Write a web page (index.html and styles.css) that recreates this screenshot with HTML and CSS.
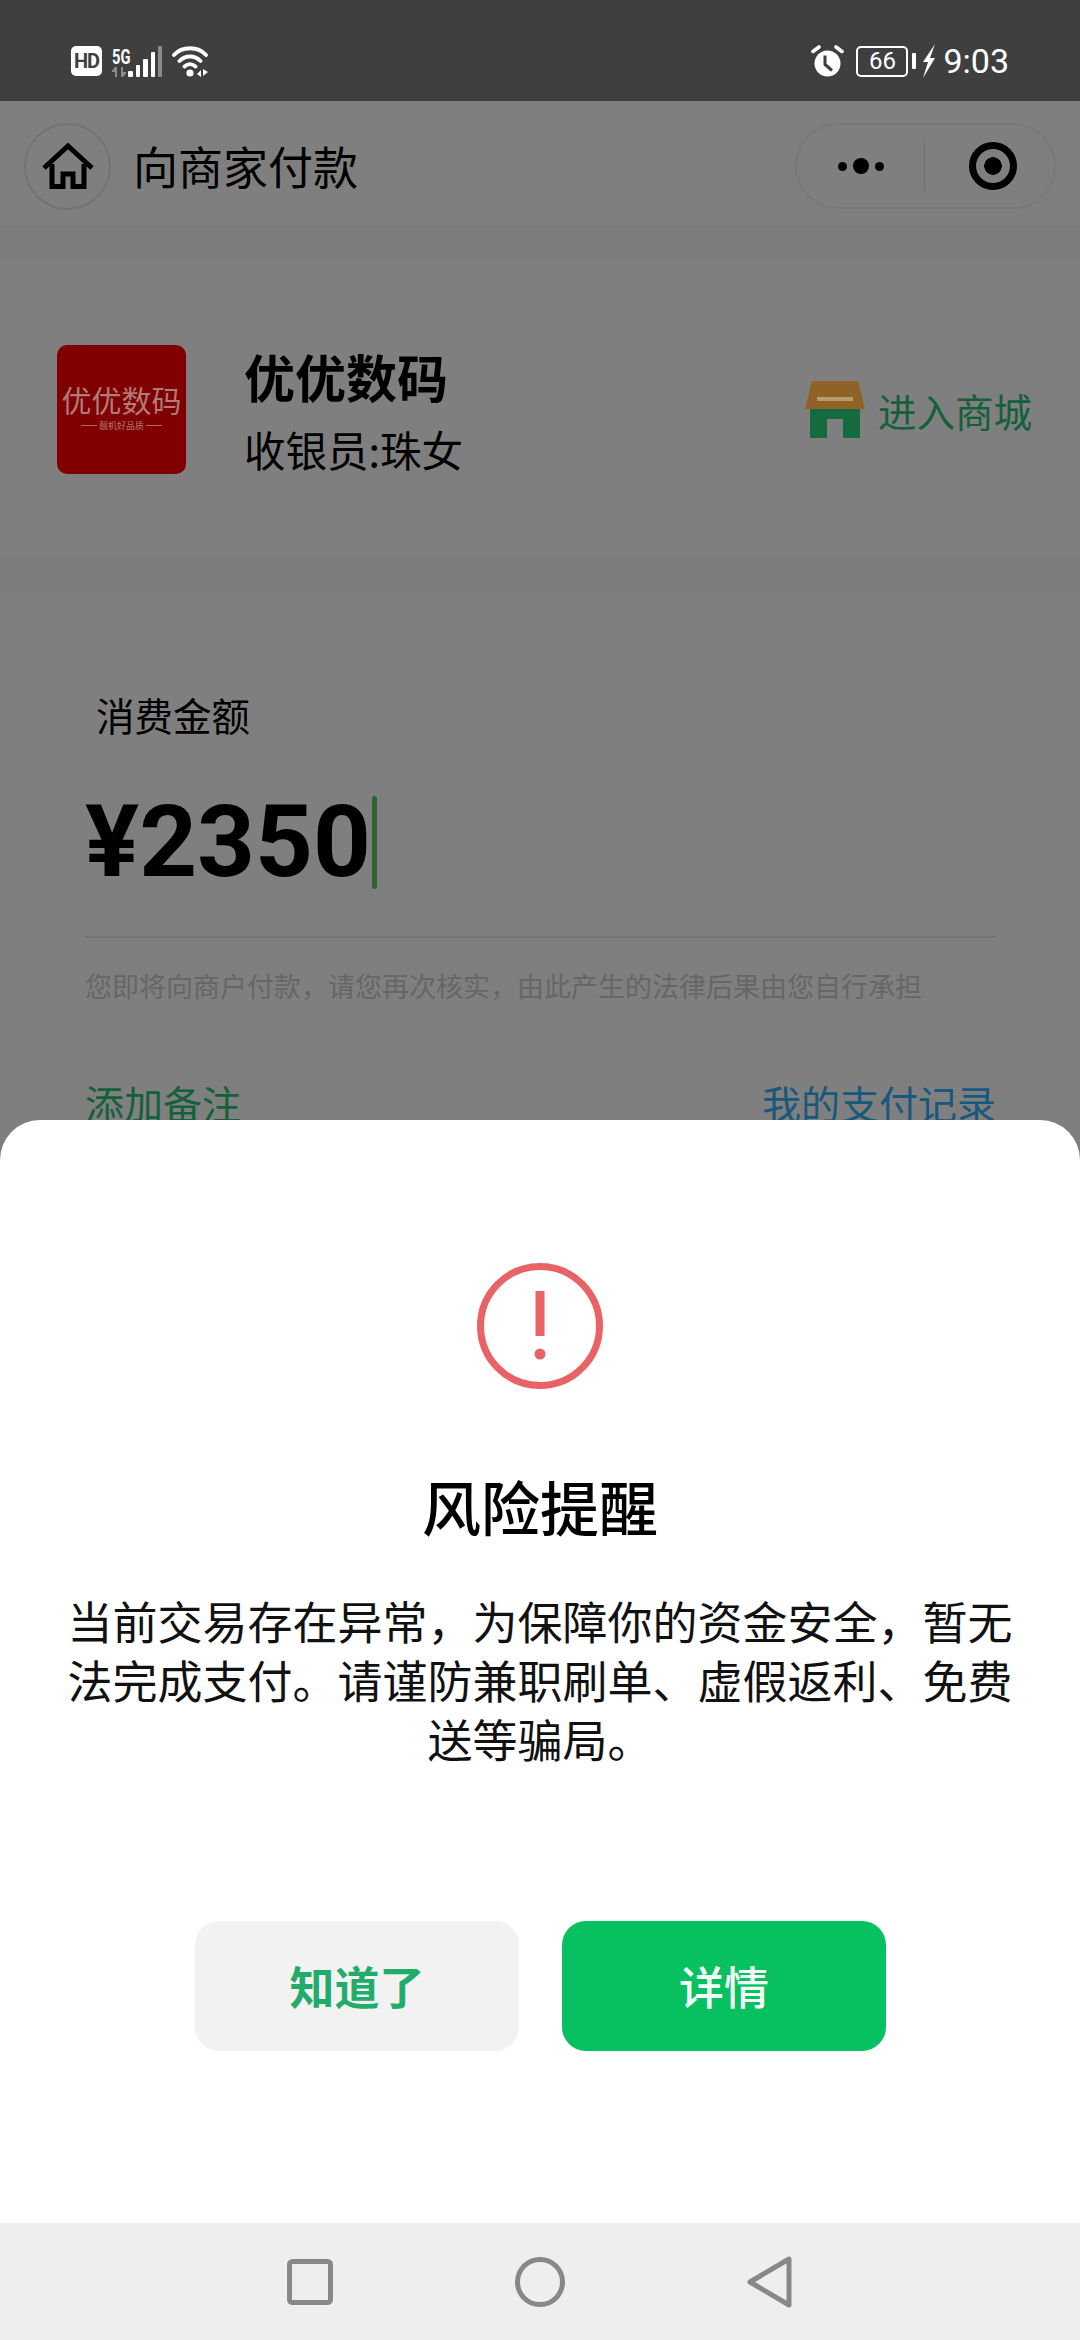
FILE: index.html
```html
<!DOCTYPE html>
<html>
	<head>
		<meta charset="utf-8">
		<title>向商家付款</title>
		<link rel="stylesheet" href="styles.css">
	</head>
	<body>
		<div class="screen">
			<div class="status_bar">
				<div class="status_left">
					<span class="hd_badge">HD</span>
					<div class="signal">
						<div class="signal_labels">
							<span class="signal_5g">5G</span>
							<svg width="14" height="10" viewBox="0 0 14 10">
								<path d="M4 0v10M4 0L1 4h3M10 10V0M10 10l3-4h-3" fill="none" stroke="#8a8a8a" stroke-width="2"/>
							</svg>
						</div>
						<svg width="34" height="31" viewBox="0 0 34 31">
							<rect x="0" y="25" width="5" height="6" rx="1" fill="#fff"/>
							<rect x="8" y="19" width="4" height="12" rx="1" fill="#fff"/>
							<rect x="15" y="13" width="5" height="18" rx="1" fill="#fff"/>
							<rect x="23" y="6" width="4" height="25" rx="1" fill="#fff"/>
							<rect x="30" y="0" width="4" height="31" rx="1" fill="#8a8a8a"/>
						</svg>
					</div>
					<svg class="wifi" width="38" height="31" viewBox="0 0 38 31">
						<path d="M2 9C10 0 26 0 34 9M7.5 15c6-6 15-6 21 0M12.5 20.5c3.500-3 7.500-3 11 0" fill="none" stroke="#fff" stroke-width="3.800" stroke-linecap="round"/>
						<circle cx="18" cy="27" r="3.600" fill="#fff"/>
						<path d="M25 28l4-4v7zM31 23v7l5-4z" fill="#fff"/>
					</svg>
				</div>
				<div class="status_right">
					<svg width="33" height="32" viewBox="0 0 33 32">
						<circle cx="16.500" cy="18.500" r="13" fill="#fff"/>
						<path d="M14 10.500v9l7 6" fill="none" stroke="#3f3f3f" stroke-width="3"/>
						<path d="M2 6.500l6-4.500M31 6.500l-6-4.500" stroke="#fff" stroke-width="3.600" stroke-linecap="round"/>
					</svg>
					<div class="battery">
						<span class="battery_body">66</span>
						<span class="battery_cap"></span>
					</div>
					<svg class="bolt" width="14" height="34" viewBox="0 0 14 34">
						<path d="M13 0L1 18h5L1 34 13 14H8z" fill="#fff"/>
					</svg>
					<span class="status_time">9:03</span>
				</div>
			</div>
			<div class="stage">
				<div class="title_bar">
					<div class="home_button">
						<svg width="52" height="46" viewBox="0 0 52 46">
							<path d="M2 25L26 3l24 22" fill="none" stroke="#000" stroke-width="5"/>
							<path d="M10 21v22.500h11V31h10v12.500h11V21" fill="none" stroke="#000" stroke-width="5"/>
						</svg>
					</div>
					<p class="title_text">向商家付款</p>
					<div class="capsule">
						<div class="capsule_more">
							<span class="dot"></span>
							<span class="dot dot_big"></span>
							<span class="dot"></span>
						</div>
						<span class="capsule_line"></span>
						<div class="capsule_close">
							<span class="target"></span>
						</div>
					</div>
				</div>
				<div class="band"></div>
				<div class="merchant">
					<div class="merchant_logo">
						<span class="logo_name">优优数码</span>
						<span class="logo_slogan">靓机好品质</span>
					</div>
					<div class="merchant_info">
						<p class="merchant_name">优优数码</p>
						<p class="merchant_cashier">收银员:珠女</p>
					</div>
					<div class="shop_link">
						<svg width="60" height="58" viewBox="0 0 60 58">
							<path d="M5 28h50v29H38V38H22v19H5z" fill="#136b3e"/>
							<path d="M7 0h46l7 28H0z" fill="#8f6326"/>
							<rect x="12" y="16" width="36" height="4" fill="#b89a6c"/>
						</svg>
						<span>进入商城</span>
					</div>
				</div>
				<div class="band"></div>
				<div class="pay_form">
					<p class="pay_label">消费金额</p>
					<div class="pay_amount">
						<span class="amount_text">¥2350</span>
						<span class="caret"></span>
					</div>
					<p class="pay_hint">您即将向商户付款，请您再次核实，由此产生的法律后果由您自行承担</p>
					<div class="pay_links">
						<span class="link_green">添加备注</span>
						<span class="link_blue">我的支付记录</span>
					</div>
				</div>
				<div class="sheet">
					<svg class="sheet_icon" width="128" height="128" viewBox="0 0 128 128">
						<circle cx="64" cy="64" r="59.500" fill="none" stroke="#e96265" stroke-width="7"/>
						<rect x="59.500" y="29" width="9" height="45" fill="#e96265"/>
						<circle cx="64" cy="92" r="5.500" fill="#e96265"/>
					</svg>
					<h1 class="sheet_title">风险提醒</h1>
					<p class="sheet_text">当前交易存在异常，为保障你的资金安全，暂无法完成支付。请谨防兼职刷单、虚假返利、免费送等骗局。</p>
					<div class="sheet_buttons">
						<div class="btn btn_light">知道了</div>
						<div class="btn btn_green">详情</div>
					</div>
				</div>
			</div>
			<div class="nav_bar">
				<svg width="46" height="46" viewBox="0 0 46 46">
					<rect x="2.500" y="2.500" width="41" height="41" rx="3" fill="none" stroke="#888" stroke-width="5"/>
				</svg>
				<svg width="50" height="50" viewBox="0 0 50 50">
					<circle cx="25" cy="25" r="22.500" fill="none" stroke="#888" stroke-width="5"/>
				</svg>
				<svg width="46" height="52" viewBox="0 0 46 52">
					<path d="M42 3v46L3 26z" fill="none" stroke="#888" stroke-width="5" stroke-linejoin="round"/>
				</svg>
			</div>
		</div>
	</body>
</html>
```

FILE: styles.css
```css
html	{
	height: 100%;
	overflow: hidden;
}
body	{
	height: 100%;
	margin: 0;
	font-family: "Noto Sans CJK SC", "Noto Sans", sans-serif;
}
p, h1	{
	margin: 0;
}
.screen	{
	display: flex;
	flex-direction: column;
	height: 2340px;
	width: 1080px;
	overflow: hidden;
	background-color: #7f7f7f;
}
.status_bar	{
	display: flex;
	justify-content: space-between;
	align-items: center;
	flex: 0 0 101px;
	padding: 21px 71px 0 71px;
	box-sizing: border-box;
	background-color: #3f3f3f;
	color: white;
}
.status_left, .status_right	{
	display: flex;
	align-items: center;
}
.status_left svg, .status_right svg	{
	display: block;
}
.hd_badge	{
	width: 31px;
	height: 30px;
	border-radius: 5px;
	background-color: white;
	color: #3f3f3f;
	font-family: "Roboto", sans-serif;
	font-size: 20px;
	font-weight: 700;
	letter-spacing: -1px;
	line-height: 30px;
	text-align: center;
}
.signal	{
	display: flex;
	align-items: flex-end;
	margin-left: 10px;
}
.signal_labels	{
	display: flex;
	flex-direction: column;
	width: 16px;
}
.signal_5g	{
	width: 26px;
	font-family: "Roboto", sans-serif;
	font-size: 21px;
	font-weight: 700;
	line-height: 20px;
	transform: scaleX(0.7);
	transform-origin: left center;
}
.wifi	{
	margin-left: 10px;
}
.battery	{
	display: flex;
	align-items: center;
	margin-left: 12px;
}
.battery_body	{
	width: 52px;
	height: 31px;
	box-sizing: border-box;
	border: 2.5px solid white;
	border-radius: 5px;
	font-family: "Roboto", sans-serif;
	font-size: 24px;
	line-height: 26px;
	text-align: center;
}
.battery_cap	{
	width: 4px;
	height: 16px;
	margin-left: 4px;
	background-color: white;
	border-radius: 1px;
}
.bolt	{
	margin-left: 6px;
}
.status_time	{
	margin-left: 7px;
	font-family: "Roboto", sans-serif;
	font-size: 34px;
	line-height: 40px;
}
.stage	{
	position: relative;
	flex: 1;
	overflow: hidden;
}
.title_bar	{
	display: flex;
	align-items: center;
	height: 124px;
	padding: 6px 24px 0 24px;
	box-sizing: border-box;
}
.home_button	{
	display: flex;
	justify-content: center;
	align-items: center;
	width: 87px;
	height: 87px;
	box-sizing: border-box;
	border: 2px solid #737373;
	border-radius: 50%;
}
.title_text	{
	margin-left: 22px;
	font-size: 45px;
	line-height: 60px;
	color: #000;
}
.capsule	{
	display: flex;
	align-items: center;
	margin-left: auto;
	width: 261px;
	height: 86px;
	box-sizing: border-box;
	border: 2px solid #797979;
	border-radius: 43px;
}
.capsule_more	{
	display: flex;
	justify-content: center;
	align-items: center;
	gap: 6px;
	width: 127px;
}
.dot	{
	width: 9px;
	height: 9px;
	border-radius: 50%;
	background-color: #000;
}
.dot_big	{
	width: 16px;
	height: 16px;
}
.capsule_line	{
	width: 1px;
	height: 50px;
	background-color: #707070;
}
.capsule_close	{
	display: flex;
	justify-content: center;
	align-items: center;
	flex: 1;
	padding-left: 6px;
}
.target	{
	width: 48px;
	height: 48px;
	box-sizing: border-box;
	border: 7px solid #000;
	border-radius: 50%;
	background: radial-gradient(circle, #000 0, #000 8.5px, transparent 9px);
}
.band	{
	height: 34px;
	background-color: #7c7c7c;
}
.merchant	{
	display: flex;
	align-items: center;
	height: 299px;
	padding: 2px 48px 0 57px;
	box-sizing: border-box;
}
.merchant_logo	{
	display: flex;
	flex-direction: column;
	align-items: center;
	justify-content: center;
	width: 129px;
	height: 129px;
	border-radius: 10px;
	background-color: #800000;
	color: #b07a7a;
}
.logo_name	{
	margin-top: -6px;
	font-size: 30px;
	line-height: 36px;
}
.logo_slogan	{
	margin-top: 2px;
	font-size: 9px;
	line-height: 14px;
	padding: 0 18px;
	background: linear-gradient(#a86a6a, #a86a6a) left center / 16px 1px no-repeat, linear-gradient(#a86a6a, #a86a6a) right center / 16px 1px no-repeat;
}
.merchant_info	{
	margin-left: 58px;
}
.merchant_name	{
	font-size: 51px;
	font-weight: 700;
	line-height: 60px;
	color: #000;
}
.merchant_cashier	{
	margin-top: 18px;
	font-size: 41.5px;
	line-height: 50px;
	color: #000;
}
.shop_link	{
	display: flex;
	align-items: center;
	gap: 13px;
	margin-left: auto;
	font-size: 38.5px;
	color: #14603a;
}
.pay_form	{
	padding: 97px 84px 0 85px;
}
.pay_label	{
	padding-left: 11px;
	font-size: 38.5px;
	line-height: 50px;
	color: #000;
}
.pay_amount	{
	display: flex;
	align-items: center;
	height: 130px;
	margin-top: 38px;
	padding-bottom: 29px;
	border-bottom: 2px solid #757575;
}
.amount_text	{
	font-family: "Roboto", sans-serif;
	font-size: 101px;
	font-weight: 700;
	line-height: 130px;
	color: #000;
}
.caret	{
	width: 5px;
	height: 93px;
	margin-left: 1px;
	border-radius: 3px;
	background-color: #2b6632;
}
.pay_hint	{
	margin-top: 29px;
	font-size: 27px;
	line-height: 38px;
	color: #666;
	white-space: nowrap;
}
.pay_links	{
	display: flex;
	justify-content: space-between;
	margin-top: 70px;
	font-size: 39px;
	line-height: 54px;
}
.link_green	{
	color: #14603a;
}
.link_blue	{
	color: #17587c;
}
.sheet	{
	position: absolute;
	left: 0;
	right: 0;
	bottom: 0;
	height: 1103px;
	display: flex;
	flex-direction: column;
	align-items: center;
	padding-top: 142px;
	box-sizing: border-box;
	border-radius: 40px 40px 0 0;
	background-color: white;
}
.sheet_icon	{
	display: block;
}
.sheet_title	{
	margin-top: 74px;
	font-size: 59px;
	font-weight: 500;
	line-height: 84px;
	color: #000;
}
.sheet_text	{
	width: 960px;
	margin-top: 43px;
	font-size: 45px;
	line-height: 59px;
	text-align: center;
	color: #111;
}
.sheet_buttons	{
	display: flex;
	gap: 43px;
	margin-top: 153px;
	margin-left: 1px;
}
.btn	{
	width: 324px;
	height: 130px;
	border-radius: 24px;
	font-size: 45px;
	line-height: 130px;
	text-align: center;
}
.btn_light	{
	background-color: #f2f2f2;
	color: #22ac6b;
	font-weight: 700;
}
.btn_green	{
	background-color: #07c160;
	color: #f4fff8;
	font-weight: 500;
}
.nav_bar	{
	display: flex;
	justify-content: center;
	align-items: center;
	gap: 182px;
	flex: 0 0 117px;
	background-color: #eeeeee;
}
```
